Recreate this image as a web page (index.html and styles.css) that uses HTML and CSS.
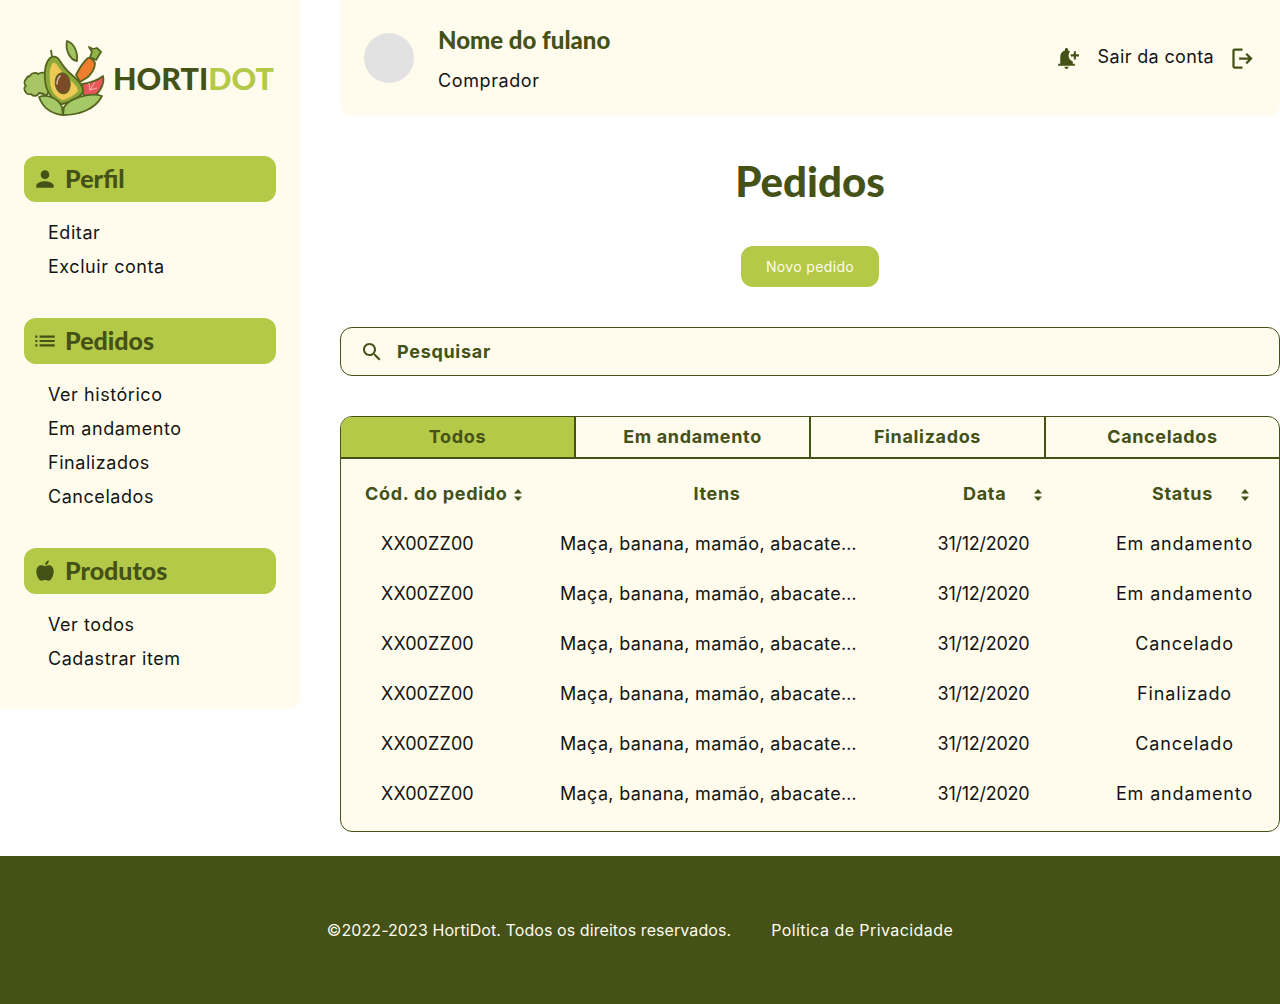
FILE: index.html
```html
<!DOCTYPE html>
<html lang="pt-BR">
<head>
    <meta charset="UTF-8">
    <meta name="viewport" content="width=device-width, initial-scale=1.0">
    <title>Pedidos - HortiDot</title>
    <link rel="stylesheet" href="styles.css">
</head>
<body>

    <div class="page">
        <aside class="sidebar">
            <div class="logo">
                <svg class="logo-icon" viewBox="24 40 81 75" aria-hidden="true">
                    <g stroke="#55641f" stroke-width="1.8" stroke-linejoin="round">
                        <path d="M67 41C73 43 78 50 77 61 70 60 65 50 67 41z" fill="#a2c35f"/>
                        <path d="M52 57l-1-7" fill="none"/>
                        <path d="M89 47l4 2 4-1 4 4-5 8-6-3 2-5z" fill="#8fb548"/>
                        <path d="M88 58c2-1 6 2 7 5 0 5-3 10-7 14l-8 5-4-7c3-6 7-13 12-17z" fill="#ee7d2d"/>
                        <path d="M82 84c8-1 16-4 21-8 2 8-3 18-15 24l-4-2z" fill="#e9565a"/>
                        <path d="M30 76c1-3 6-4 8-2 3-2 8-2 10 1l2 15-4 6c-2-2-4-3-7-3-1 3-6 4-8 1-2 1-5 0-6-3-1-2-1-4 1-5-2-2-2-5 0-7 1-2 3-3 4-3z" fill="#a8c565"/>
                        <path d="M50 58c4-3 8-1 10 3 3 5 7 10 12 14 6 5 11 10 11 16-1 5-11 11-21 13-10-4-16-12-17-24-1-10 1-18 5-22z" fill="#8ea93a"/>
                    </g>
                    <path d="M53 63c3-1 4 2 6 5 3 4 7 8 11 12 5 4 8 8 8 11-3 4-10 8-16 9-8-4-12-11-12-20-1-7 0-14 3-17z" fill="#efc955"/>
                    <ellipse cx="62.700" cy="83.300" rx="7.500" ry="10.500" transform="rotate(-8 62.700 83.300)" fill="#7b4a26" stroke="#55641f" stroke-width="1"/>
                    <path d="M60 76c-2 2-3 5-3 8" stroke="#d9b9a0" stroke-width="1.500" fill="none" stroke-linecap="round"/>
                    <path d="M90 90l5-8M90 90l-1-7M90 90l7-2" stroke="#f6b5ae" stroke-width="1" fill="none"/>
                    <g stroke="#55641f" stroke-width="1.8" stroke-linejoin="round">
                        <path d="M39 97c8-3 19 1 23 10l1 8c-11-1-20-7-24-18z" fill="#a6c968"/>
                        <path d="M102 96c-12-4-32 2-38 11l-1 8c15 0 32-5 39-19z" fill="#a6c968"/>
                    </g>
                </svg>
                <span class="logo-text">HORTI<span class="logo-accent">DOT</span></span>
            </div>

            <nav class="side-nav">
                <section class="nav-section">
                    <h2 class="nav-title">
                        <svg class="nav-icon" viewBox="0 0 24 24"><path d="M12 12c2.21 0 4-1.79 4-4s-1.79-4-4-4-4 1.79-4 4 1.79 4 4 4zm0 2c-2.67 0-8 1.34-8 4v2h16v-2c0-2.66-5.33-4-8-4z"/></svg>
                        Perfil
                    </h2>
                    <ul class="nav-list">
                        <li>Editar</li>
                        <li>Excluir conta</li>
                    </ul>
                </section>

                <section class="nav-section">
                    <h2 class="nav-title">
                        <svg class="nav-icon" viewBox="0 0 24 24"><path d="M3 13h2v-2H3v2zm0 4h2v-2H3v2zm0-8h2V7H3v2zm4 4h14v-2H7v2zm0 4h14v-2H7v2zM7 7v2h14V7H7z"/></svg>
                        Pedidos
                    </h2>
                    <ul class="nav-list">
                        <li>Ver histórico</li>
                        <li>Em andamento</li>
                        <li>Finalizados</li>
                        <li>Cancelados</li>
                    </ul>
                </section>

                <section class="nav-section">
                    <h2 class="nav-title">
                        <svg class="nav-icon" viewBox="0 0 24 24"><path d="M12 7.700c-1.300-.9-2.800-1.300-4.300-.9C5.200 7.500 4 9.700 4 12.400c0 3.600 2.200 8.600 5 8.600 1 0 1.900-.6 3-.6s2 .6 3 .6c2.800 0 5-5 5-8.600 0-2.700-1.200-4.900-3.700-5.600-1.500-.4-3 0-4.300.9zM12 6.500c0-2.200 1.300-4 3.500-4.500.2 2.300-1.200 4.200-3.500 4.500z"/></svg>
                        Produtos
                    </h2>
                    <ul class="nav-list">
                        <li>Ver todos</li>
                        <li>Cadastrar item</li>
                    </ul>
                </section>
            </nav>
        </aside>

        <main class="content">
            <header class="user-bar">
                <div class="avatar"></div>
                <div class="user-info">
                    <div class="user-name">Nome do fulano</div>
                    <div class="user-role">Comprador</div>
                </div>
                <div class="user-actions">
                    <svg class="bell-icon" viewBox="0 0 24 24"><path d="M10 20h4c0 1.100-.9 2-2 2s-2-.9-2-2zm4-11c0 2.610 1.670 4.830 4 5.650V17h2v2H4v-2h2v-7c0-2.790 1.910-5.140 4.500-5.800v-.7C10.500 2.670 11.170 2 12 2s1.500.67 1.500 1.500v.7c.71.18 1.360.49 1.940.9A5.940 5.940 0 0 0 14 9zm10-1h-3V5h-2v3h-3v2h3v3h2v-3h3V8z"/></svg>
                    <span class="logout-label">Sair da conta</span>
                    <svg class="logout-icon" viewBox="0 0 24 24"><path d="M5 21c-.55 0-1.020-.2-1.410-.59-.39-.39-.59-.86-.59-1.410V5c0-.55.2-1.020.59-1.410C3.980 3.200 4.450 3 5 3h7v2H5v14h7v2H5zm11-4-1.380-1.450L17.170 13H9v-2h8.170l-2.550-2.550L16 7l5 5-5 5z"/></svg>
                </div>
            </header>

            <h1 class="page-title">Pedidos</h1>

            <div class="new-order">
                <button type="button" class="new-order-button">Novo pedido</button>
            </div>

            <div class="search-box">
                <svg class="search-icon" viewBox="0 0 24 24"><path d="M15.500 14h-.79l-.28-.27C15.410 12.590 16 11.110 16 9.500 16 5.910 13.090 3 9.500 3S3 5.910 3 9.500 5.910 16 9.500 16c1.610 0 3.090-.59 4.230-1.570l.27.28v.79l5 4.990L20.490 19l-4.990-5zm-6 0C7.010 14 5 11.990 5 9.500S7.010 5 9.500 5 14 7.010 14 9.500 11.990 14 9.500 14z"/></svg>
                <span>Pesquisar</span>
            </div>

            <div class="orders">
                <div class="tabs">
                    <div class="tab active">Todos</div>
                    <div class="tab">Em andamento</div>
                    <div class="tab">Finalizados</div>
                    <div class="tab">Cancelados</div>
                </div>

                <table class="orders-table">
                    <colgroup>
                        <col class="col-code">
                        <col class="col-items">
                        <col class="col-date">
                        <col class="col-status">
                    </colgroup>
                    <thead>
                        <tr>
                            <th class="th-code">Cód. do pedido <svg class="sort" viewBox="0 0 10 14"><path d="M5 1l4 4.500H1zM5 13L1 8.500h8z"/></svg></th>
                            <th class="th-items">Itens</th>
                            <th class="th-date">Data <svg class="sort" viewBox="0 0 10 14"><path d="M5 1l4 4.500H1zM5 13L1 8.500h8z"/></svg></th>
                            <th class="th-status">Status <svg class="sort" viewBox="0 0 10 14"><path d="M5 1l4 4.500H1zM5 13L1 8.500h8z"/></svg></th>
                        </tr>
                    </thead>
                    <tbody>
                        <tr><td class="td-code">XX00ZZ00</td><td>Maça, banana, mamão, abacate…</td><td class="td-date">31/12/2020</td><td class="td-status">Em andamento</td></tr>
                        <tr><td class="td-code">XX00ZZ00</td><td>Maça, banana, mamão, abacate…</td><td class="td-date">31/12/2020</td><td class="td-status">Em andamento</td></tr>
                        <tr><td class="td-code">XX00ZZ00</td><td>Maça, banana, mamão, abacate…</td><td class="td-date">31/12/2020</td><td class="td-status">Cancelado</td></tr>
                        <tr><td class="td-code">XX00ZZ00</td><td>Maça, banana, mamão, abacate…</td><td class="td-date">31/12/2020</td><td class="td-status">Finalizado</td></tr>
                        <tr><td class="td-code">XX00ZZ00</td><td>Maça, banana, mamão, abacate…</td><td class="td-date">31/12/2020</td><td class="td-status">Cancelado</td></tr>
                        <tr><td class="td-code">XX00ZZ00</td><td>Maça, banana, mamão, abacate…</td><td class="td-date">31/12/2020</td><td class="td-status">Em andamento</td></tr>
                    </tbody>
                </table>
            </div>
        </main>
    </div>

    <footer class="footer">
        <span class="footer-copy">©2022-2023 HortiDot. Todos os direitos reservados.</span>
        <span class="footer-link">Política de Privacidade</span>
    </footer>

</body>
</html>
```

FILE: styles.css
```css
/* --- General Setup --- */
:root {
    --cream: #fffcee;
    --lime: #b4c947;
    --olive: #445117;
    --text-color: #141414;
}

* {
    box-sizing: border-box;
}

body {
    margin: 0;
    font-family: 'Inter', 'Open Sans', sans-serif;
    font-size: 18px;
    letter-spacing: 0.35px;
    color: var(--text-color);
    background-color: #ffffff;
}

.page {
    display: flex;
    align-items: flex-start;
    gap: 40px;
    height: 856px;
}

/* --- Sidebar --- */
.sidebar {
    width: 300px;
    height: 709px;
    flex-shrink: 0;
    padding: 40px 24px 0;
    background-color: var(--cream);
    border-bottom-right-radius: 12px;
}

.logo {
    display: flex;
    align-items: center;
    gap: 8px;
    height: 75px;
}

.logo-icon {
    width: 81px;
    height: 75px;
    flex-shrink: 0;
    overflow: visible;
}

.logo-text {
    font-family: 'Lato', sans-serif;
    font-size: 30.5px;
    font-weight: 900;
    letter-spacing: 0;
    color: var(--olive);
}

.logo-accent {
    color: var(--lime);
}

.side-nav {
    margin-top: 40.5px;
}

.nav-section {
    margin-bottom: 34px;
}

.nav-title {
    display: flex;
    align-items: center;
    gap: 7px;
    height: 46px;
    margin: 0;
    padding: 0 0 2px 8px;
    border-radius: 12px;
    background-color: var(--lime);
    color: var(--olive);
    font-family: 'Lato', sans-serif;
    font-size: 25px;
    font-weight: 900;
    letter-spacing: 0;
}

.nav-icon {
    width: 26px;
    height: 26px;
    fill: var(--olive);
    margin-top: 2px;
}

.nav-list {
    list-style: none;
    margin: 0;
    padding: 14px 0 0 24px;
    letter-spacing: 0.55px;
}

.nav-list li {
    height: 34px;
    line-height: 34px;
}

/* --- Main Content --- */
.content {
    flex: 1;
    min-width: 0;
}

.user-bar {
    display: flex;
    align-items: center;
    height: 116px;
    padding: 0 24px;
    background-color: var(--cream);
    border-radius: 0 0 12px 12px;
}

.avatar {
    width: 50px;
    height: 50px;
    border-radius: 50%;
    background-color: #e2e2e2;
}

.user-info {
    margin: 1px 0 0 24px;
}

.user-name {
    font-family: 'Lato', sans-serif;
    font-size: 24px;
    font-weight: 900;
    letter-spacing: 0;
    color: var(--olive);
    line-height: 30px;
    margin-bottom: 15px;
}

.user-role {
    line-height: 22px;
    letter-spacing: 0.6px;
}

.user-actions {
    display: flex;
    align-items: center;
    margin-left: auto;
}

.bell-icon {
    width: 25px;
    height: 25px;
    fill: var(--olive);
    margin-right: 19px;
}

.logout-label {
    margin-bottom: 4px;
}

.logout-icon {
    width: 27px;
    height: 27px;
    fill: var(--olive);
    margin-left: 15px;
}

.page-title {
    margin: 40px 0 0;
    text-align: center;
    font-family: 'Lato', sans-serif;
    font-size: 42px;
    font-weight: 900;
    letter-spacing: 0;
    line-height: 50px;
    color: var(--olive);
}

.new-order {
    display: flex;
    justify-content: center;
    margin-top: 40px;
}

.new-order-button {
    width: 138px;
    height: 41px;
    border: none;
    border-radius: 12px;
    background-color: var(--lime);
    color: #fffcee;
    font-family: inherit;
    font-size: 14px;
    letter-spacing: 0.35px;
    cursor: pointer;
}

/* --- Search --- */
.search-box {
    display: flex;
    align-items: center;
    gap: 13px;
    height: 49px;
    margin-top: 40px;
    padding-left: 19px;
    border: 1px solid var(--olive);
    border-radius: 12px;
    background-color: var(--cream);
    color: var(--olive);
    font-weight: 700;
    letter-spacing: 0.7px;
}

.search-icon {
    width: 24px;
    height: 24px;
    fill: var(--olive);
}

/* --- Orders Card --- */
.orders {
    height: 416px;
    margin-top: 40px;
    border: 1px solid var(--olive);
    border-radius: 12px;
    background-color: var(--cream);
    overflow: hidden;
}

.tabs {
    display: grid;
    grid-template-columns: 235px 235px 235px 1fr;
    height: 42px;
    border-bottom: 2px solid var(--olive);
}

.tab {
    display: flex;
    align-items: center;
    justify-content: center;
    border-right: 2px solid var(--olive);
    color: var(--olive);
    font-weight: 700;
    letter-spacing: 0.65px;
    padding-bottom: 1px;
}

.tab:last-child {
    border-right: none;
}

.tab.active {
    background-color: var(--lime);
}

/* --- Orders Table --- */
.orders-table {
    width: 100%;
    margin-top: 9px;
    border-collapse: collapse;
    table-layout: fixed;
}

.col-code {
    width: 219px;
}

.col-items {
    width: 314px;
}

.col-date {
    width: 216px;
}

.orders-table tr {
    height: 50px;
}

.orders-table th {
    padding: 0;
    color: var(--olive);
    font-weight: 700;
    text-align: left;
    letter-spacing: 0.7px;
}

.orders-table td {
    padding: 0;
    white-space: nowrap;
}

.orders-table .th-code {
    padding-left: 24px;
}

.orders-table .th-items {
    text-align: center;
}

.orders-table .th-date {
    padding-left: 89px;
}

.orders-table .th-status {
    padding-left: 62px;
}

.th-code .sort {
    margin-left: 0;
}

.th-date .sort {
    margin-left: 22px;
}

.th-status .sort {
    margin-left: 22px;
}

.sort {
    width: 10px;
    height: 14px;
    fill: var(--olive);
    vertical-align: -2px;
}

.orders-table .td-code {
    padding-left: 40px;
    letter-spacing: 0.1px;
}

.orders-table .td-date {
    padding-left: 3px;
    text-align: center;
    letter-spacing: -0.25px;
}

.td-status {
    text-align: center;
    letter-spacing: 0.85px;
}

/* --- Footer --- */
.footer {
    display: flex;
    align-items: center;
    justify-content: center;
    gap: 40px;
    height: 148px;
    background-color: var(--olive);
    color: #fffcee;
    font-size: 16px;
}

.footer-copy {
    letter-spacing: 0.08px;
}

.footer-link {
    letter-spacing: 0.43px;
}
```
